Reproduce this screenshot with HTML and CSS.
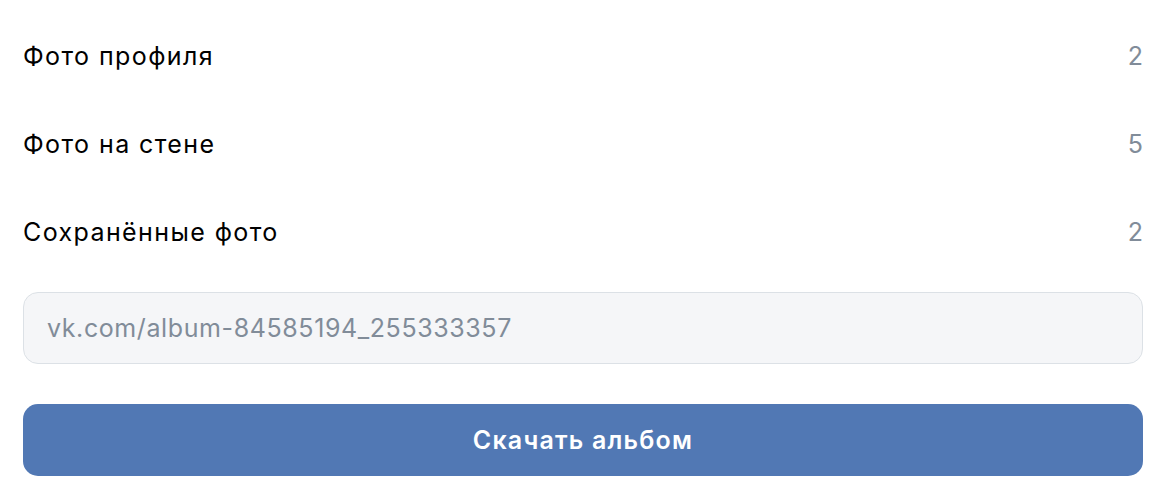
FILE: index.html
```html
<!DOCTYPE html>
<html lang="ru">
<head>
    <meta charset="UTF-8">
    <meta name="viewport" content="width=device-width, initial-scale=1.0">
    <title>Скачать альбом</title>
    <link rel="stylesheet" href="styles.css">
</head>
<body>
    <div class="panel">
        <div class="row"><span class="label">Фото профиля</span><span class="count">2</span></div>
        <div class="row"><span class="label">Фото на стене</span><span class="count">5</span></div>
        <div class="row"><span class="label">Сохранённые фото</span><span class="count">2</span></div>
        <input class="link" type="text" placeholder="vk.com/album-84585194_255333357">
        <button class="download">Скачать альбом</button>
    </div>
</body>
</html>
```

FILE: styles.css
```css
body{
    margin: 0;
    background-color: #fff;
    font-family: Inter, "Noto Sans", sans-serif;
}
.panel{
    display: flex;
    flex-direction: column;
    padding: 12px 27px 18px 23px;
}
.row{
    display: flex;
    justify-content: space-between;
    align-items: center;
    height: 88px;
    font-size: 25px;
}
.label{
    color: #000;
    letter-spacing: 1.4px;
}
.count{
    color: #818c99;
}
.link{
    box-sizing: border-box;
    margin-top: 16px;
    height: 72px;
    padding: 0 23px;
    border: 1px solid #dce1e6;
    border-radius: 15px;
    background-color: #f5f6f8;
    font-family: inherit;
    font-size: 25px;
    letter-spacing: 0.6px;
    color: #000;
    outline: none;
}
.link::placeholder{
    color: #818c99;
}
.download{
    margin-top: 40px;
    height: 72px;
    border: none;
    border-radius: 15px;
    background-color: #5178b4;
    color: #fff;
    font-family: inherit;
    font-size: 25px;
    font-weight: 600;
    letter-spacing: 1.2px;
}
```
